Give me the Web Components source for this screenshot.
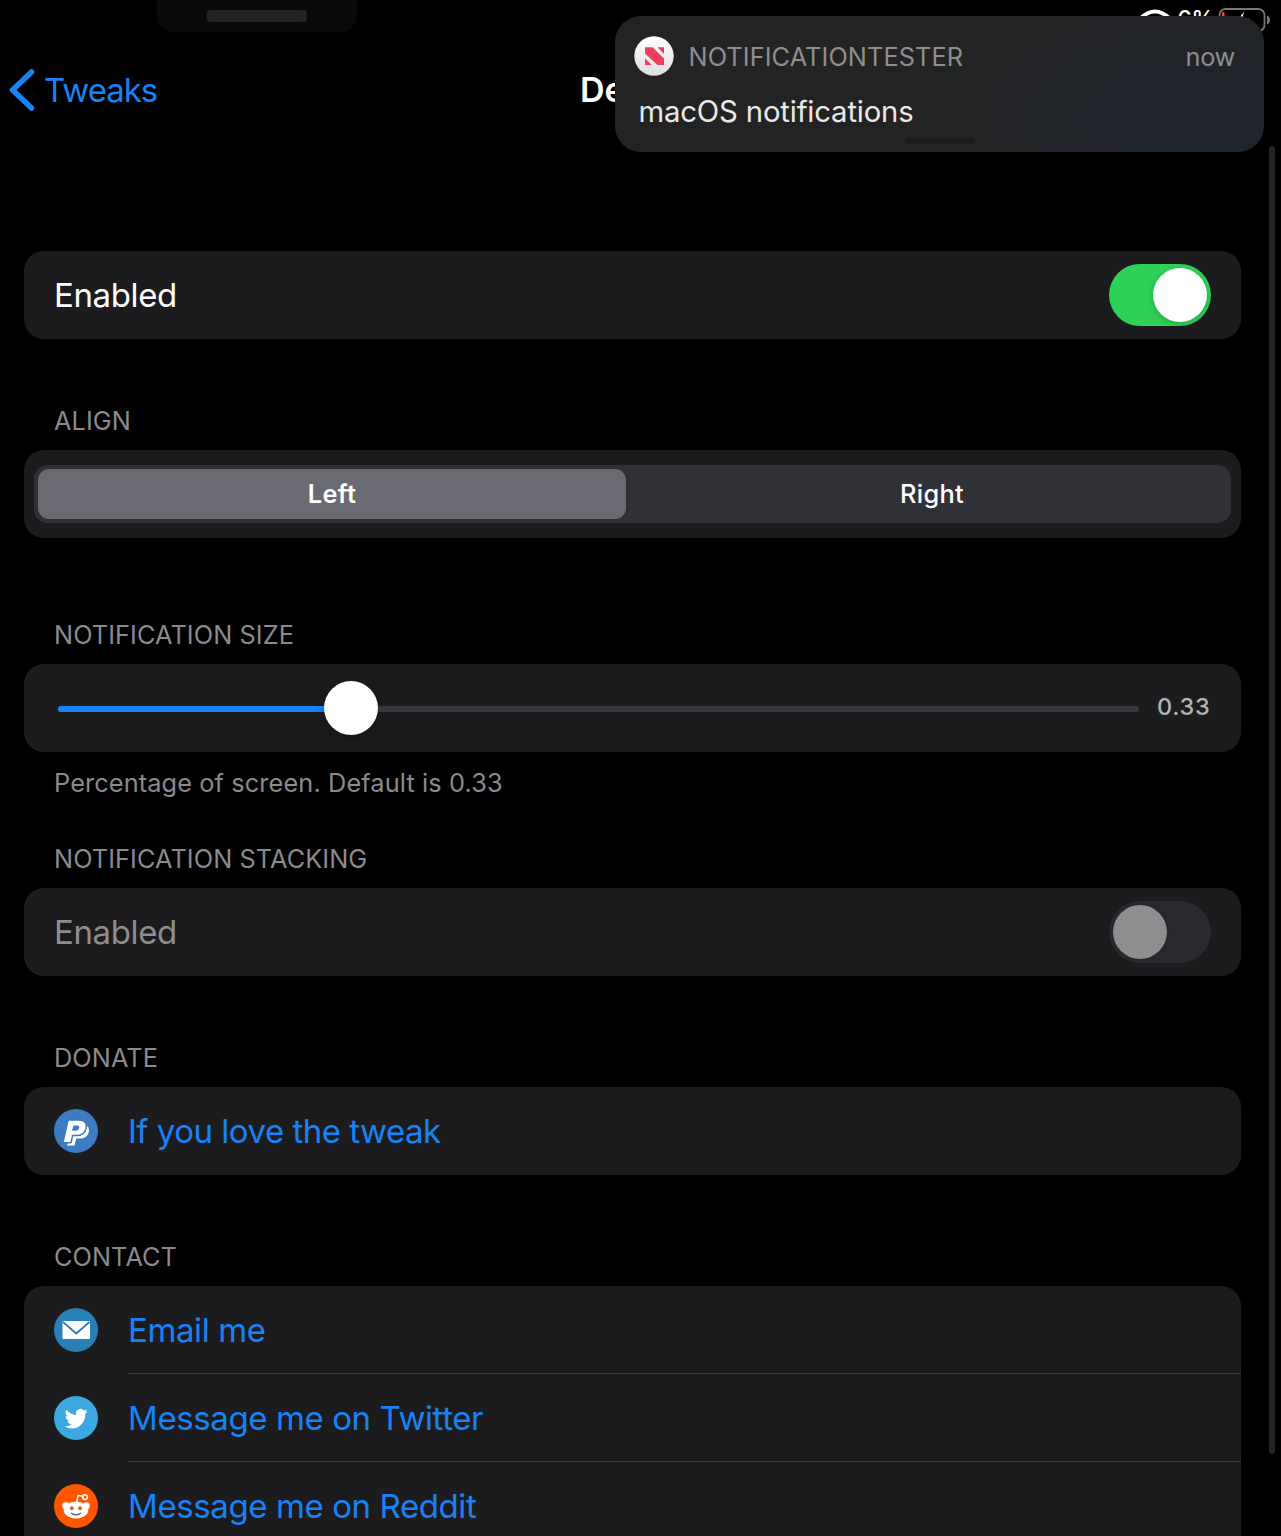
<!DOCTYPE html>
<html lang="en">
<head>
<meta charset="utf-8">
<title>Settings</title>
<style>
html{background:#000}
body{margin:0;width:1281px;height:1536px;overflow:hidden;background:#000;font-family:Inter,"Liberation Sans",sans-serif;color:#fff}
</style>
</head>
<body>
<settings-screen></settings-screen>
<script>
const define = (name, html, setup) => customElements.define(name, class extends HTMLElement {
  connectedCallback() {
    if (this.shadowRoot) return;
    const root = this.attachShadow({ mode: 'open' });
    const t = document.createElement('template');
    t.innerHTML = html;
    root.append(t.content.cloneNode(true));
    if (setup) setup(this, root);
  }
});

define('status-bar', `
<style>
:host{display:flex;height:40px;box-sizing:border-box;padding:7px 9px 0 157px;justify-content:space-between;align-items:flex-start}
.grab{width:200px;height:32px;margin-top:-7px;background:#090909;border-radius:0 0 16px 16px;display:flex;justify-content:center}
.grab i{width:100px;height:12px;margin-top:10px;border-radius:4px;background:#242424}
.right{display:flex;align-items:flex-start}
.pct{font-size:23px;line-height:24px;font-weight:500;margin:0 4px 0 6px;letter-spacing:-.3px}
svg{display:block}
</style>
<div class="grab"><i></i></div>
<div class="right">
<svg style="margin-top:2px" width="32" height="24" viewBox="0 0 32 24" fill="none" stroke="#fff" stroke-width="4"><path d="M2 9Q16-4 30 9M7 14q9-8 18 0M12 19q4-3 8 0"/></svg>
<span class="pct">6%</span>
<svg width="54" height="26" viewBox="0 0 54 26"><rect x="1.500" y="2" width="45" height="22" rx="6" fill="none" stroke="#777" stroke-width="1.800"/><rect x="4" y="5" width="2.500" height="16" rx="1" fill="#ff453a"/><path d="M27 3L18 14h7l-3 9 10-12h-7z" fill="#fff" stroke="#000" stroke-width="1"/><path d="M49 8.500q3 1.500 3 4.500t-3 4.500z" fill="#777"/></svg>
</div>`);

define('nav-bar', `
<style>
:host{display:flex;height:100px;align-items:center;padding-left:9px}
svg{display:block;margin-right:9px}
.back{display:flex;align-items:center;color:#1783f6;font-size:33px;line-height:40px;width:571px;letter-spacing:-1px}
.title{font-size:34px;line-height:40px;font-weight:600}
</style>
<div class="back"><svg width="26" height="42" viewBox="0 0 26 42" fill="none" stroke="#1783f6" stroke-width="5.500" stroke-linecap="round" stroke-linejoin="round"><path d="M22.500 2.900L3.600 21l18.900 18.100"/></svg><span><slot name="back"></slot></span></div>
<div class="title"><slot></slot></div>`);

define('settings-group', `
<style>
:host{display:block;padding:0 40px 0 24px}
header,footer{padding-left:30px;font-size:25.3px;line-height:30px;letter-spacing:.08px;color:#8a8a8f}
header{height:var(--gap,111px);box-sizing:border-box;padding-bottom:14px;display:flex;align-items:flex-end}
footer{height:61px;box-sizing:border-box;padding-top:16px;letter-spacing:.12px}
.card{background:#1c1c1e;border-radius:20px;overflow:hidden}
</style>
<header><span><slot name="header"></slot></span></header>
<div class="card"><slot></slot></div>
<footer><slot name="footer"></slot></footer>`, (el, root) => {
  if (!el.querySelector('[slot=footer]')) root.querySelector('footer').remove();
});

define('toggle-row', `
<style>
:host{display:flex;height:88px;align-items:center;justify-content:space-between;padding:0 30px;font-size:33px;line-height:40px;letter-spacing:-.37px}
:host([off]) .label{color:#8d8d8e}
.switch{width:102px;height:62px;border-radius:31px;background:#30d158;box-sizing:border-box;padding:4px;display:flex;justify-content:flex-end}
.switch i{width:54px;height:54px;border-radius:50%;background:#fff;box-shadow:0 2px 7px rgba(0,0,0,.2)}
:host([off]) .switch{background:#2a2a2e;justify-content:flex-start}
:host([off]) .switch i{background:#8e8e90;box-shadow:0 0 4px rgba(0,0,0,.15)}
</style>
<span class="label"><slot></slot></span><span class="switch"><i></i></span>`);

define('segmented-row', `
<style>
:host{display:block;padding:15px 10px}
.track{height:58px;box-sizing:border-box;padding:4px;border-radius:14px;background:#313138;display:flex}
.seg{display:flex;align-items:center;justify-content:center;font-size:25.3px;line-height:30px;font-weight:500;letter-spacing:.3px}
.on{width:588px;border-radius:11px;background:#6a6a72;font-weight:600;box-shadow:0 0 3px rgba(0,0,0,.25)}
.off{flex:1;padding-left:11px}
</style>
<div class="track"><div class="seg on"><span><slot name="first"></slot></span></div><div class="seg off"><span><slot name="second"></slot></span></div></div>`);

define('slider-row', `
<style>
:host{display:flex;height:88px;align-items:center;padding:0 20px 0 34px}
.track{flex:none;width:1081px;height:6px;margin-top:2px;border-radius:3px;background:#3a3a3e;display:flex;align-items:center}
.fill{width:267px;height:6px;border-radius:3px 0 0 3px;background:#1783fb}
.knob{flex:none;width:54px;height:54px;border-radius:50%;background:#fff;margin:-2px 0 0 -1px;box-shadow:0 4px 12px rgba(0,0,0,.25)}
.val{margin:-2px 0 0 18px;font-size:23.5px;line-height:30px;font-weight:500;letter-spacing:.7px;white-space:nowrap;color:#b3b3b5}
</style>
<div class="track"><div class="fill"></div><div class="knob"></div></div><span class="val"><slot></slot></span>`);

const icons = {
  paypal: '<circle cx="22" cy="22" r="22" fill="#3d7cc0"/><g transform="translate(-1.200 .3)"><path d="M19.500 15.500h12q6 1.500 4.300 8-1.800 5.800-8.300 5.800h-4l-1.700 7h-7.500z" fill="#fff"/><path d="M15.300 10.800h11.200q8.400.4 6.800 8.200-1.700 7.300-9.500 7.300h-3.900l-1.800 7.200h-8z" fill="#fff" stroke="#3d7cc0" stroke-width="1.500"/><path d="M20.600 16.200h3.600q2.800.2 2.200 2.600-.6 2.600-3.400 2.600h-3.700z" fill="#3d7cc0"/></g>',
  mail: '<circle cx="22" cy="22" r="22" fill="#2980b9"/><rect x="8.500" y="13" width="27.500" height="18" rx="1" fill="#fff"/><path d="M9 14l13.200 11.500L35.500 14" fill="none" stroke="#2980b9" stroke-width="1.700"/>',
  twitter: '<circle cx="22" cy="22" r="22" fill="#3ba9e0"/><path transform="translate(10.800 10.700) scale(.95 1)" d="M23.950 4.570a10 10 0 0 1-2.820.77 4.960 4.960 0 0 0 2.160-2.720c-.95.550-2 .960-3.130 1.190a4.920 4.920 0 0 0-8.380 4.480C7.690 8.090 4.070 6.130 1.640 3.160a4.920 4.920 0 0 0 1.520 6.570 4.900 4.900 0 0 1-2.230-.61v.06a4.920 4.920 0 0 0 3.950 4.830 5 5 0 0 1-2.210.08 4.940 4.940 0 0 0 4.600 3.420A9.870 9.870 0 0 1 0 19.540a13.990 13.990 0 0 0 7.550 2.210c9.050 0 14-7.500 14-13.980 0-.21 0-.42-.02-.63a9.940 9.940 0 0 0 2.420-2.570z" fill="#fff"/>',
  reddit: '<circle cx="22" cy="22" r="22" fill="#ff5700"/><g transform="translate(0 .3)"><path d="M22.500 18l1.800-7 5.500 1.500" fill="none" stroke="#fff" stroke-width="1.500"/><circle cx="31" cy="12.800" r="2.400" fill="none" stroke="#fff" stroke-width="1.500"/><circle cx="11.800" cy="21.500" r="3.500" fill="#fff"/><circle cx="32.300" cy="21.500" r="3.500" fill="#fff"/><ellipse cx="22" cy="25.700" rx="12.300" ry="8.600" fill="#fff"/><circle cx="17.800" cy="24" r="2" fill="#e8632a"/><circle cx="26" cy="24" r="2" fill="#e8632a"/><path d="M17.500 29q4.500 3 9 0" fill="none" stroke="#666" stroke-width="1.400" stroke-linecap="round"/></g>'
};

define('link-row', `
<style>
:host{display:flex;height:88px;padding-left:30px;align-items:center;color:#1783f6;font-size:33px;line-height:40px;letter-spacing:-.4px}
svg{display:block;width:44px;height:44px;margin-right:30px}
.text{flex:1;height:88px;box-sizing:border-box;display:flex;align-items:center}
:host([divided]) .text{border-bottom:1px solid #3b3b3e;padding-top:1px}
</style>
<svg viewBox="0 0 44 44"></svg><div class="text"><span><slot></slot></span></div>`, (el, root) => {
  root.querySelector('svg').innerHTML = icons[el.getAttribute('icon')];
});

define('notification-banner', `
<style>
:host{display:block;box-sizing:border-box;width:649px;height:136px;border-radius:26px;padding:20px 29px 0 19px;background:radial-gradient(ellipse 300px 150px at 600px 105px,#1f232d 0,#202329 45%,rgba(35,35,36,0) 100%),#232323}
.head{display:flex;align-items:center;height:40px;font-size:25.3px;line-height:32px;color:#8e8e90}
svg{display:block;margin-right:14.5px}
.app{flex:1;padding-top:2px;letter-spacing:.1px}.when{padding-top:2px;letter-spacing:-.3px}
.msg{margin:18px 0 0 4.5px;font-size:29.3px;line-height:36px;letter-spacing:-.17px;color:#e9e9ea}
.grip{width:70px;height:6px;border-radius:3px;background:#1d1d1e;margin:8px 0 0 271px}
</style>
<div class="head"><svg width="40" height="40" viewBox="0 0 40 40"><defs><linearGradient id="g" x1="0" y1="0" x2="0" y2="1"><stop offset="0" stop-color="#fff"/><stop offset="1" stop-color="#dedee0"/></linearGradient></defs><circle cx="20" cy="20" r="19.700" fill="url(#g)"/><path d="M11 11.300h7.500L30 22.500V29h-6.500L11 17.500z" fill="#ee3f5c"/><path d="M23.500 11.300H30v6.700zM11 22.300V29h6.700z" fill="#ee3f5c"/></svg><span class="app"><span><slot name="app"></slot></span></span><span class="when"><span><slot name="time"></slot></span></span></div>
<div class="msg"><span><slot></slot></span></div>
<div class="grip"></div>`);

define('settings-screen', `
<style>
:host{display:block;position:relative;width:1281px;height:1536px;overflow:hidden;background:#000}
notification-banner{position:absolute;left:615px;top:16px}
.scroll{position:absolute;left:1269px;top:146px;width:6px;height:1308px;border-radius:3px;background:#242425}
.tall{--gap:126px}.footed{--gap:75px}
.love{letter-spacing:-.5px}
</style>
<status-bar></status-bar>
<nav-bar><span slot="back">Tweaks</span>De</nav-bar>
<settings-group><toggle-row>Enabled</toggle-row></settings-group>
<settings-group><span slot="header">ALIGN</span><segmented-row><span slot="first">Left</span><span slot="second">Right</span></segmented-row></settings-group>
<settings-group class="tall"><span slot="header">NOTIFICATION SIZE</span><slider-row>0.33</slider-row><span slot="footer">Percentage of screen. Default is 0.33</span></settings-group>
<settings-group class="footed"><span slot="header">NOTIFICATION STACKING</span><toggle-row off>Enabled</toggle-row></settings-group>
<settings-group><span slot="header">DONATE</span><link-row class="love" icon="paypal">If you love the tweak</link-row></settings-group>
<settings-group><span slot="header">CONTACT</span><link-row icon="mail" divided>Email me</link-row><link-row icon="twitter" divided>Message me on Twitter</link-row><link-row icon="reddit">Message me on Reddit</link-row><div style="height:60px"></div></settings-group>
<div class="scroll"></div>
<notification-banner><span slot="app">NOTIFICATIONTESTER</span><span slot="time">now</span>macOS notifications</notification-banner>`);
</script>
</body>
</html>
